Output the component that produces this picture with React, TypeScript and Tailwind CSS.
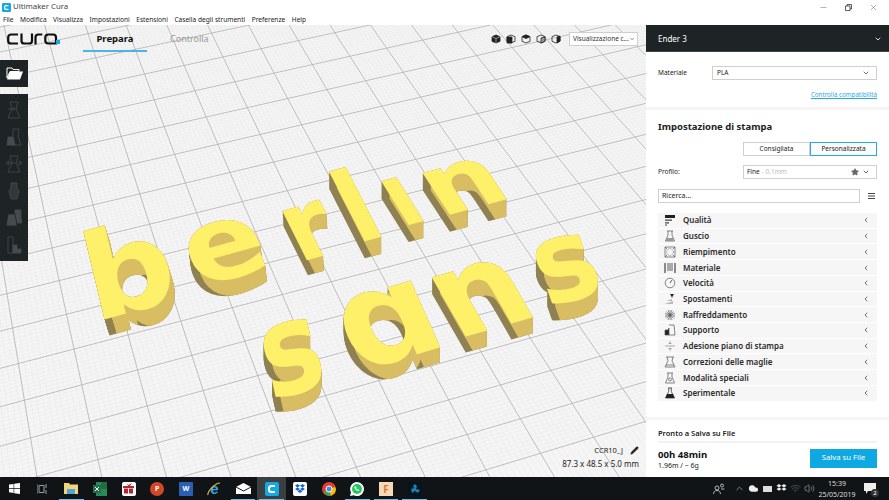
import { ChevronDown, ChevronLeft, ChevronUp, Cloud, Minus, Pencil, Star, Volume2, Wifi, X } from "lucide-react";
import type { ReactNode } from "react";

const V1 = { x: -163, y: -770 };
const V2 = { x: 6000, y: -1200 };

function gridPath(step: number, skipMajor: boolean) {
  let d = "";
  for (let u = -6; u <= 19; u += step) {
    if (skipMajor && Math.abs(u - Math.round(u)) < 0.001) continue;
    const x150 = 85 + 48.7 * u;
    const k = (x150 - V1.x) / (150 - V1.y);
    d += `M${(V1.x + k * (0 - V1.y)).toFixed(1)} 0L${(V1.x + k * (460 - V1.y)).toFixed(1)} 460`;
  }
  for (let v = -9; v <= 11; v += step) {
    if (skipMajor && Math.abs(v - Math.round(v)) < 0.001) continue;
    const y = 167 + 31 * v + 0.6 * v * v;
    const s = (V2.y - y) / (V2.x - 120);
    // svg starts 25px below the page top
    d += `M-5 ${(y + s * -125 - 25).toFixed(1)}L660 ${(y + s * 540 - 25).toFixed(1)}`;
  }
  return d;
}

// one entry per letter of the printed model: baseline centre and em vectors, page coordinates
const letters = [
  { ch: "b", x: 138, y: 310, a: 122, b: -34, c: 28, d: 116, ex: 5, h: 16 },
  { ch: "e", x: 236, y: 277, a: 115, b: -32, c: 40, d: 98, ex: 2, h: 16 },
  { ch: "r", x: 322, y: 256, a: 92, b: -26, c: 45, d: 90, ex: 1, h: 15 },
  { ch: "l", x: 373, y: 239, a: 95, b: -26, c: 47, d: 92, ex: 0, h: 17 },
  { ch: "ı", x: 416, y: 223, a: 85, b: -23, c: 50, d: 80, ex: 0, h: 17 },
  { ch: "n", x: 478, y: 207, a: 103, b: -28, c: 50, d: 76, ex: 0, h: 17 },
  { ch: "s", x: 300, y: 392, a: 100, b: -30, c: 28, d: 125, ex: 0, h: 15 },
  { ch: "ɑ", x: 404, y: 358, a: 132, b: -39, c: 54, d: 122, ex: 0, h: 15 },
  { ch: "n", x: 499, y: 327, a: 122, b: -35, c: 62, d: 108, ex: 0, h: 16 },
  { ch: "s", x: 577, y: 299, a: 102, b: -28, c: 38, d: 110, ex: 0, h: 17 },
];

function Model() {
  return (
    <g>
      <defs>
        {letters.map((l, i) => (
          <text
            key={i}
            id={`glyph${i}`}
            transform={`matrix(${l.a / 100} ${l.b / 100} ${l.c / 100} ${l.d / 100} ${l.x} ${l.y - 25})`}
            textAnchor="middle"
            fontSize={100}
            fontWeight={700}
            fontFamily="'DejaVu Sans', sans-serif"
          >
            {l.ch}
          </text>
        ))}
        {letters.map((l, i) => (
          <clipPath key={i} id={`body${i}`}>
            {Array.from({ length: l.h + 1 }, (_, n) => (
              <use key={n} href={`#glyph${i}`} x={(l.ex * n) / l.h} y={n} />
            ))}
          </clipPath>
        ))}
      </defs>
      {letters.map((l, i) => (
        <g key={i}>
          {Array.from({ length: l.h + 1 }, (_, n) => (
            <use key={n} href={`#glyph${i}`} x={(l.ex * n) / l.h} y={n} fill="#8f8152" />
          ))}
          <g clipPath={`url(#body${i})`}>
            {Array.from({ length: l.h + 1 }, (_, n) => (
              <use key={n} href={`#glyph${i}`} x={(l.ex * n) / l.h + 8} y={n} fill="#d9bd63" />
            ))}
          </g>
          <use href={`#glyph${i}`} fill="#fff06a" />
        </g>
      ))}
    </g>
  );
}

function Flask({ kind }: { kind: number }) {
  const c = "#454b4f";
  return (
    <svg width="16" height="18" viewBox="0 0 16 18" fill="none" stroke={c} strokeWidth="0.8">
      {kind === 0 && <><path d="M4 1h8l-2 7 4 9H2l4-9z" /><path d="M2 8h7M7 6l2 2-2 2" /></>}
      {kind === 1 && <><path d="M7 1h6l-1 7 3 9H5l2-9z" /><path d="M1 17l1-8h5l2 8z" fill={c} /></>}
      {kind === 2 && <><path d="M4 1h8l-2 7 4 9H2l4-9z" /><path d="M0 8l3-2v4zM16 8l-3-2v4zM3 8h6" /></>}
      {kind === 3 && <path d="M5 1h6v5l2 3-2 8H5L3 9l2-3z" fill={c} fillOpacity="0.5" />}
      {kind === 4 && <><path d="M9 1h6v8l1 5H9z" fill={c} /><path d="M2 5h7l1 5 1 7H0z" fill={c} stroke="#1e2326" /></>}
      {kind === 5 && <><path d="M2 1h5v16H2z" /><path d="M7 9h4v4h4v4H7z" fill={c} /></>}
    </svg>
  );
}

function RowIcon({ i }: { i: number }) {
  const c = "#555";
  const d = "#222";
  return (
    <svg width="12" height="12" viewBox="0 0 12 12" fill="none" stroke={c} strokeWidth="0.7">
      {i === 0 && <><path d="M1 1h10v3H1z" fill={d} stroke="none" /><path d="M1 5.5h7v1.3H1zM1 8.3h4v1.3H1zM1 10.5h2v1H1z" fill="#444" stroke="none" /></>}
      {i === 1 && <><path d="M3 1h6M4 1v4l-2.5 6h9L8 5V1" /><path d="M3 8h6v3H2z" fill="#999" stroke="none" /></>}
      {i === 2 && <><path d="M1 1h10v10H1z" /><circle cx="6" cy="6" r="3.4" strokeDasharray="1 1" /><path d="M1 1l2 2M11 1L9 3M1 11l2-2M11 11L9 9" /></>}
      {i === 3 && <><path d="M1 1v10M11 1v10" stroke="#444" strokeWidth="1.2" /><path d="M3 1h6v8H3z" fill="#aaa" stroke="none" /></>}
      {i === 4 && <><circle cx="6" cy="6" r="4.8" /><path d="M6 6l2-3" stroke={d} /></>}
      {i === 5 && <><path d="M6 1h4L8.5 3.5v1h-1v-1z" fill={d} stroke="none" /><path d="M2 8h6v-2M0.5 11h8.5V8z" fill="#bbb" stroke="none" /></>}
      {i === 6 && <path d="M6 1v10M1 6h10M2.5 2.5l7 7M9.5 2.5l-7 7M4 1l4 10M8 1L4 11M1 4l10 4M11 4L1 8" strokeWidth="0.6" />}
      {i === 7 && <><path d="M5 1h5l1 10H5" /><path d="M1 11V6h3l1-2v7z" fill={d} /></>}
      {i === 8 && <path d="M6 1v3M6 8v3M1 6h10M4.5 3.5h3M4.5 8.5h3" stroke="#888" />}
      {i === 9 && <><path d="M2 1h8M3 1l1 4-3 6h10L8 5l1-4" /><path d="M2 9h8" /></>}
      {i === 10 && <><path d="M3 1h6M4 1v4l-2.5 6h9L8 5V1" /><circle cx="6" cy="7.5" r="1.5" /></>}
      {i === 11 && <><path d="M4 1h4M4.7 1v3.5L1.5 11h9L7.3 4.5V1" stroke={d} /><path d="M3 7h6l1.5 4h-9z" fill={d} stroke="none" /></>}
    </svg>
  );
}

const settings = [
  "Qualità",
  "Guscio",
  "Riempimento",
  "Materiale",
  "Velocità",
  "Spostamenti",
  "Raffreddamento",
  "Supporto",
  "Adesione piano di stampa",
  "Correzioni delle maglie",
  "Modalità speciali",
  "Sperimentale",
];

function Cube({ face }: { face: number }) {
  return (
    <svg width="10" height="10" viewBox="0 0 10 10" fill="none" stroke="#222" strokeWidth="0.8">
      <path d="M5 1l4 1.7v4.6L5 9 1 7.3V2.7z" fill={face === 0 ? "#222" : "none"} />
      {face === 0 && <path d="M1 2.7L5 4.5l4-1.8M5 4.5V9" stroke="#fff" strokeWidth="0.5" />}
      {face === 1 && <path d="M1 3h5v6H1z" fill="#222" />}
      {face === 2 && <path d="M1 2.7L5 1l4 1.7L5 4.5z" fill="#222" />}
      {face === 3 && <path d="M5 4v5l4-1.7V2.7z" fill="#999" />}
      {face === 4 && <path d="M6 3l3-1v5l-3 2z" fill="#222" />}
    </svg>
  );
}

function Tile({ active, running, children }: { active?: boolean; running?: boolean; children: ReactNode }) {
  return (
    <div className={`relative flex h-full w-[28.6px] items-center justify-center ${active ? "bg-[#3b3f42]" : ""}`}>
      {children}
      {running && <div className="absolute inset-x-[2px] bottom-0 h-[1px] bg-[#76b9ed]" />}
    </div>
  );
}

function Box({ bg, children, round }: { bg: string; children?: ReactNode; round?: boolean }) {
  return (
    <div
      className={`flex h-[14px] w-[14px] items-center justify-center text-[7px] font-bold leading-none text-white ${round ? "rounded-full" : "rounded-[1px]"}`}
      style={{ background: bg }}
    >
      {children}
    </div>
  );
}

function CuraMark({ size }: { size: number }) {
  return (
    <svg width={size} height={size} viewBox="0 0 14 14">
      <rect width="14" height="14" rx="2" fill="#16a8e1" />
      <path d="M10 4H6.5A2.5 2.5 0 0 0 4 6.5v1A2.5 2.5 0 0 0 6.5 10H10" fill="none" stroke="#fff" strokeWidth="2" />
    </svg>
  );
}

function Taskbar() {
  return (
    <div className="flex h-[23px] items-center bg-[#101417] text-white">
      <Tile>
        <svg width="11" height="11" viewBox="0 0 11 11" fill="#fff">
          <path d="M0 1.6l4.6-.7v4.2H0zM5.2.8L11 0v5.1H5.2zM0 5.8h4.6V10L0 9.3zM5.2 5.8H11V11l-5.8-.8z" />
        </svg>
      </Tile>
      <Tile>
        <svg width="11" height="10" viewBox="0 0 11 10" fill="none" stroke="#9aa0a3">
          <path d="M2 1.5h5v7H2zM0 0v10M9 0v4M9 6v4" />
        </svg>
      </Tile>
      <Tile running>
        <svg width="14" height="13" viewBox="0 0 14 13">
          <path d="M0 1h5l1 1.5h8V12H0z" fill="#f2d47a" />
          <path d="M3 7h8v5H3z" fill="#4aa8d8" />
        </svg>
      </Tile>
      <Tile>
        <svg width="14" height="14" viewBox="0 0 14 14">
          <path d="M3 0h11v14H3z" fill="#2a8a57" />
          <path d="M8 0h6v7H8z" fill="#1f6e43" />
          <rect y="3" width="8" height="8" fill="#1e7145" />
          <path d="M2 5l4 4M6 5L2 9" stroke="#fff" strokeWidth="1" />
        </svg>
      </Tile>
      <Tile>
        <div className="flex h-[14px] w-[14px] items-center justify-center rounded-[2px] bg-white">
          <svg width="11" height="11" viewBox="0 0 11 11" fill="#b3262e">
            <path d="M0 3h11v2H0zM1 5.6h4v5H1zM6 5.6h4v5H6zM3 0l2.5 3H7l2-3-3.500 2z" />
          </svg>
        </div>
      </Tile>
      <Tile>
        <Box bg="#d24726" round>P</Box>
      </Tile>
      <Tile>
        <Box bg="#2b5fb3">W</Box>
      </Tile>
      <Tile>
        <div className="relative flex h-[14px] w-[14px] items-center justify-center">
          <span className="font-['Liberation_Sans',sans-serif] text-[15px] font-bold leading-none text-[#2ea6e6]">e</span>
          <svg className="absolute inset-0" width="14" height="14" viewBox="0 0 14 14" fill="none">
            <path d="M1 13C0 10 8 1 13 1" stroke="#e8b92e" strokeWidth="1.200" />
          </svg>
        </div>
      </Tile>
      <Tile running>
        <svg width="15" height="11" viewBox="0 0 15 11">
          <path d="M0 4l7.500-4L15 4v7H0z" fill="#fff" />
          <path d="M0 4l7.500 4L15 4" fill="none" stroke="#101417" />
        </svg>
      </Tile>
      <Tile active running>
        <CuraMark size={14} />
      </Tile>
      <Tile>
        <div className="flex h-[14px] w-[14px] items-center justify-center rounded-[2px] bg-white">
          <svg width="10" height="9" viewBox="0 0 10 9" fill="#0d62d6">
            <path d="M2.500 0L5 1.700 2.500 3.400 0 1.700zM7.500 0L10 1.700 7.500 3.400 5 1.700zM2.500 3.400L5 5.100 2.500 6.800 0 5.100zM7.500 3.400L10 5.100 7.500 6.800 5 5.100zM2.500 7.300L5 5.700l2.500 1.600L5 9z" />
          </svg>
        </div>
      </Tile>
      <Tile>
        <svg width="14" height="14" viewBox="0 0 14 14">
          <circle cx="7" cy="7" r="7" fill="#e0412f" />
          <path d="M7 7L1.200 11 7 14h1l4-3.500z" fill="#34a853" />
          <path d="M7 7l6 -2 1 2-1 4-4 3z" fill="#fbbc05" />
          <circle cx="7" cy="7" r="3" fill="#4286f5" stroke="#fff" />
        </svg>
      </Tile>
      <Tile running>
        <svg width="14" height="14" viewBox="0 0 14 14">
          <path d="M7 0a7 7 0 1 1-3.300 13.200L0 14l1-3.600A7 7 0 0 1 7 0z" fill="#fff" />
          <circle cx="7" cy="7" r="5" fill="#25c560" />
          <path d="M5 4c-1 1-.5 2.500.5 3.500S8 9.500 9.500 8.500L8.300 7.300 7.500 7.800 6.200 6.500 6.700 5.700z" fill="#fff" />
        </svg>
      </Tile>
      <Tile running>
        <div className="flex h-[14px] w-[14px] items-center justify-center bg-[#f7d9b8] text-[10px] font-bold leading-none text-[#d97a2b]">F</div>
      </Tile>
      <Tile running>
        <div className="flex h-[14px] w-[14px] items-center justify-center bg-[#05141d]">
          <svg width="10" height="10" viewBox="0 0 10 10" fill="#1b7fb8">
            <path d="M5 0l2 2-1 3 4 1-2 3-3-2-3 2-1-4 3-1-1-2z" />
          </svg>
        </div>
      </Tile>
      <div className="ml-auto flex h-full items-center">
        <svg className="mr-[9px]" width="12" height="11" viewBox="0 0 12 11" fill="none" stroke="#ddd" strokeWidth="0.8">
          <circle cx="4" cy="5" r="2" />
          <path d="M0.500 11c0-2 1.500-3.500 3.500-3.500S7.500 9 7.500 11" />
          <circle cx="9" cy="2.500" r="1.500" />
          <path d="M8 6h3.500" />
        </svg>
        <div className="flex w-[82px] items-center gap-[3px] text-[#ddd]">
          <ChevronUp size={11} strokeWidth={1.2} />
          <Cloud size={11} fill="#eee" strokeWidth={0} />
          <svg width="11" height="8" viewBox="0 0 11 8" fill="#ddd"><path d="M1 1h9v6H1z" /></svg>
          <svg width="11" height="9" viewBox="0 0 10 9" fill="#eee">
            <path d="M2.500 0L5 1.700 2.500 3.400 0 1.700zM7.500 0L10 1.700 7.500 3.400 5 1.700zM2.500 3.400L5 5.100 2.500 6.800 0 5.100zM7.500 3.400L10 5.100 7.500 6.800 5 5.100z" />
          </svg>
          <Wifi size={11} strokeWidth={1} color="#888" />
          <Volume2 size={11} strokeWidth={1} />
        </div>
        <div className="flex w-[42px] flex-col items-center text-[7px] leading-[11px] text-[#ddd]">
          <span>15:39</span>
          <span>25/05/2019</span>
        </div>
        <div className="relative ml-[6px] mr-[13px] flex h-full w-[12px] items-center">
          <svg width="12" height="11" viewBox="0 0 12 11" fill="#eee"><path d="M0 0h12v8H4l-2 3V8H0z" /></svg>
          <div className="absolute -right-[3px] bottom-[3px] flex h-[8px] w-[8px] items-center justify-center rounded-full bg-[#333] text-[6px] leading-none">2</div>
        </div>
      </div>
    </div>
  );
}

function Viewport() {
  return (
    <div className="relative h-full w-[646px] overflow-hidden bg-[#f5f5f5]">
      <svg className="absolute inset-0" width="646" height="452" fill="none" aria-label="berlin sans">
        <path d={gridPath(0.1, true)} stroke="#e9e9e9" strokeWidth="0.5" />
        <path d={gridPath(1, false)} stroke="#b0b0b0" strokeWidth="0.8" />
        <Model />
      </svg>

      <svg className="absolute left-[7px] top-[8px]" width="54" height="12" viewBox="0 0 54 12" fill="none" stroke="#101010" strokeWidth="2.200">
        <path d="M11 1.500H4A2.800 2.800 0 0 0 1.200 4.300v3.400A2.800 2.800 0 0 0 4 10.500h7" />
        <path d="M14.500 0.500v7.200a2.800 2.800 0 0 0 2.800 2.800h4.900a2.800 2.800 0 0 0 2.800-2.800V0.500" />
        <path d="M28.500 11.500V4.300a2.800 2.800 0 0 1 2.800-2.800h4" />
        <path d="M49 10.500h-7.700a3 3 0 0 1-3-3V4.500a3 3 0 0 1 3-3h4.700a3 3 0 0 1 3 3V11.500" />
      </svg>
      <svg className="absolute left-[56px] top-[15px]" width="5" height="5"><rect width="4" height="4" fill="#16a8e1" /></svg>

      <div className="absolute left-[83px] top-[7px] flex h-[20px] w-[64px] flex-col items-center justify-between text-[9.500px] font-bold leading-[14px] text-[#111]">
        <span>Prepara</span>
        <div className="h-[2px] w-full bg-[#4cb5e8]" />
      </div>
      <div className="absolute left-[170px] top-[7px] text-[9px] leading-[14px] text-[#999]">Controlla</div>

      <div className="absolute left-0 top-[35px] flex h-[27px] w-[28px] items-center justify-center bg-[#1e2326]">
        <svg width="17" height="13" viewBox="0 0 17 13">
          <path d="M1 1h5l1 1.500h6v2H4L1 11z" fill="none" stroke="#fff" />
          <path d="M4 4.500h13L14 12.500H1z" fill="#fff" />
        </svg>
      </div>
      <div className="absolute left-0 top-[69px] flex h-[167px] w-[28px] flex-col items-center justify-around bg-[#1e2326] py-[2px]">
        {[0, 1, 2, 3, 4, 5].map((k) => (
          <Flask key={k} kind={k} />
        ))}
      </div>

      <div className="absolute left-[491px] top-[9px] flex gap-[5px]">
        {[0, 1, 2, 3, 4].map((f) => (
          <Cube key={f} face={f} />
        ))}
      </div>
      <div className="absolute left-[569px] top-[7px] flex h-[14px] w-[69px] items-center justify-between whitespace-nowrap border border-[#cfcfcf] bg-white pl-[3px] pr-[2px] text-[6.500px] text-[#333]">
        <span>Visualizzazione c...</span>
        <ChevronDown size={8} strokeWidth={2} />
      </div>

      <div className="absolute bottom-[6px] right-[7px] flex flex-col items-end text-[7px] leading-[14px] text-[#222]">
        <div className="flex items-center gap-[7px]">
          <span className="text-[7.500px]">CCR10_J</span>
          <Pencil size={9} fill="#222" strokeWidth={1} />
        </div>
        <span className="text-[8px]">87.3 x 48.5 x 5.0 mm</span>
      </div>
    </div>
  );
}

function Sidebar() {
  return (
    <div className="flex h-full w-[243px] flex-col bg-white text-[#222]">
      <div className="flex h-[27px] items-center justify-between border-b border-[#3d4245] bg-[#1e2326] pl-[12px] pr-[7px] pt-[1px] text-[8px] text-white">
        <span>Ender 3</span>
        <ChevronDown size={8} strokeWidth={2.500} />
      </div>

      <div className="flex flex-col px-[12px] pt-[14px] text-[6.500px]">
        <div className="flex items-center">
          <span className="w-[54px]">Materiale</span>
          <div className="flex h-[14px] flex-1 items-center justify-between border border-[#cfcfcf] pl-[4px] pr-[6px]">
            <span>PLA</span>
            <ChevronDown size={8} strokeWidth={2} />
          </div>
        </div>
        <a className="mt-[10px] self-end text-[6.200px] leading-[10px] text-[#2aa9e0] underline">Controlla compatibilità</a>
      </div>

      <div className="mt-[7px] h-[3px] bg-[#f5f5f5]" />

      <div className="px-[12px] pt-[10px]">
        <div className="text-[9.500px] font-bold leading-[13px]">Impostazione di stampa</div>
        <div className="mt-[9px] ml-[85px] flex h-[14px] text-[6.500px]">
          <div className="flex flex-1 items-center justify-center border border-[#cfcfcf]">Consigliata</div>
          <div className="flex flex-1 items-center justify-center border border-[#29a9e0] bg-[#fafdff]">Personalizzata</div>
        </div>
        <div className="mt-[9px] flex items-center text-[6.500px]">
          <span className="w-[85px]">Profilo:</span>
          <div className="flex h-[14px] flex-1 items-center border border-[#cfcfcf] pl-[3px] pr-[6px]">
            <span>Fine</span>
            <span className="ml-[2px] text-[#bbb]">- 0.1mm</span>
            <Star className="ml-auto mr-[3px]" size={8} fill="#666" color="#666" />
            <ChevronDown size={8} strokeWidth={2} />
          </div>
        </div>
        <div className="mt-[10px] flex items-center text-[7px]">
          <div className="flex h-[14px] w-[202px] items-center border border-[#cfcfcf] pl-[3px]">Ricerca...</div>
          <svg className="ml-[8px]" width="7" height="6" viewBox="0 0 7 6" fill="#444">
            <path d="M0 0h7v1H0zM0 2.500h7v1H0zM0 5h7v1H0z" />
          </svg>
        </div>
      </div>

      <div className="mx-[12px] mt-[10px] flex flex-col gap-[1px]">
        {settings.map((name, i) => (
          <div key={name} className="flex h-[14.730px] items-center bg-[#f6f6f6] pl-[6px] pr-[7px] text-[8px] font-semibold text-[#2a2a2a]">
            <RowIcon i={i} />
            <span className="ml-[7px]">{name}</span>
            <ChevronLeft className="ml-auto" size={8} strokeWidth={2} />
          </div>
        ))}
      </div>

      <div className="mt-[16px] h-[3px] bg-[#f5f5f5]" />

      <div className="px-[12px] pt-[8px]">
        <div className="text-[7.500px] font-semibold leading-[11px]">Pronto a Salva su File</div>
        <div className="mt-[2px] h-[2px] bg-[#f2f2f2]" />
        <div className="mt-[6px] flex items-start justify-between">
          <div className="flex flex-col">
            <span className="text-[9.600px] font-bold leading-[12px] text-[#111]">00h 48min</span>
            <span className="text-[7px] leading-[9px]">1.96m / ~ 6g</span>
          </div>
          <div className="flex h-[19px] w-[67px] items-center justify-center bg-[#0ea8e2] text-[7.700px] text-white">Salva su File</div>
        </div>
      </div>
    </div>
  );
}

export default function App() {
  return (
    <div className="flex h-[500px] w-[889px] flex-col overflow-hidden bg-white font-['Noto_Sans','Open_Sans',sans-serif]">
      <div className="flex h-[14px] items-center pl-[2px] pr-[11px] text-[7.800px] text-[#444]">
        <CuraMark size={9} />
        <span className="ml-[2px]">Ultimaker Cura</span>
        <div className="ml-auto flex items-center gap-[17px] text-[#333]">
          <Minus size={9} strokeWidth={1} />
          <svg width="7" height="7" viewBox="0 0 7 7" fill="none" stroke="#333" strokeWidth="0.8">
            <path d="M0.500 2h4.500v4.500H0.500zM2 2V0.500h4.500V5H5" />
          </svg>
          <X size={9} strokeWidth={1} />
        </div>
      </div>
      <div className="flex h-[11px] items-center gap-[6.500px] pl-[3px] text-[6.600px] text-[#222]">
        {["File", "Modifica", "Visualizza", "Impostazioni", "Estensioni", "Casella degli strumenti", "Preferenze", "Help"].map((m) => (
          <span key={m}>{m}</span>
        ))}
      </div>
      <div className="flex h-[452px]">
        <Viewport />
        <Sidebar />
      </div>
      <Taskbar />
    </div>
  );
}
